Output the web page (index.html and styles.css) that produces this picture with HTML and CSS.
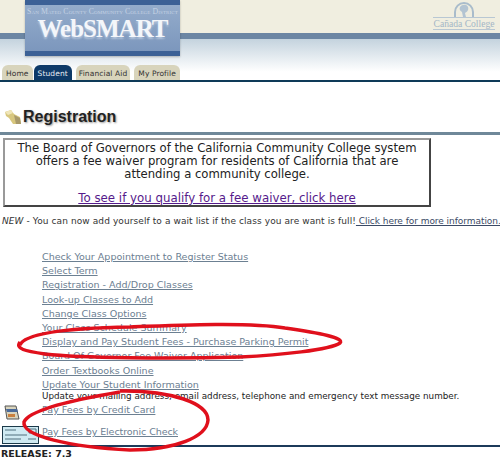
FILE: index.html
```html
<!DOCTYPE html>
<html lang="en">
<head>
    <meta charset="UTF-8">
    <title>WebSMART - Registration</title>
    <link rel="stylesheet" href="styles.css">
</head>
<body>
    <div class="page">
        <div class="header">
            <div class="band-top"></div>
            <div class="band-bar"></div>
            <div class="band-fade">
                <div class="tabs">
                    <a class="tab tab-home">Home</a>
                    <a class="tab tab-active">Student</a>
                    <a class="tab tab-aid">Financial Aid</a>
                    <a class="tab">My Profile</a>
                </div>
            </div>
            <div class="band-line"></div>

            <div class="logo">
                <div class="logo-district">San Mateo County Community College District</div>
                <div class="logo-name">WebSMART</div>
            </div>

            <div class="college">
                <svg class="college-mark" width="24" height="15" viewBox="0 0 24 15">
                    <path d="M3 15V10a9 9 0 0 1 18 0v5" fill="none" stroke="#a9bccb" stroke-width="2"/>
                    <path d="M8 5c2-3 7-3 8 0s-1 5-3 6l1 4h-3l-1-5c-2-1-3-3-2-5z" fill="#b3c4d2"/>
                </svg>
                <div class="college-name">Cañada College</div>
            </div>
        </div>

        <div class="title-row">
            <svg width="18" height="16" viewBox="0 0 18 16">
                <path d="M1 3 7 1l3 4 6 3 1 7H9L5 9 2 7z" fill="#d8c77e"/>
                <path d="M1 3 7 1l2 3-5 2z" fill="#f0e6b8"/>
                <path d="M10 6l6 3 1 6H12z" fill="#a8996a"/>
            </svg>
            <h1>Registration</h1>
        </div>
        <div class="rule"></div>

        <div class="waiver">
            <p>The Board of Governors of the California Community College system<br>
            offers a fee waiver program for residents of California that are<br>
            attending a community college.</p>
            <a class="waiver-link">To see if you qualify for a fee waiver, click here</a>
        </div>

        <p class="notice"><em>NEW</em> - You can now add yourself to a wait list if the class you are want is full!<a class="notice-link"> Click here for more information.</a></p>

        <ul class="menu">
            <li><a>Check Your Appointment to Register Status</a></li>
            <li><a>Select Term</a></li>
            <li><a>Registration - Add/Drop Classes</a></li>
            <li><a>Look-up Classes to Add</a></li>
            <li><a>Change Class Options</a></li>
            <li><a>Your Class Schedule Summary</a></li>
            <li><a>Display and Pay Student Fees - Purchase Parking Permit</a></li>
            <li><a>Board Of Governor Fee Waiver Application</a></li>
            <li><a>Order Textbooks Online</a></li>
            <li><a>Update Your Student Information</a></li>
        </ul>
        <p class="menu-note">Update your mailing address, email address, telephone and emergency text message number.</p>

        <div class="pay-row pay-card">
            <svg width="16" height="15" viewBox="0 0 16 15">
                <path d="M1 1h11l3 13H3z" fill="#d9d4bd" stroke="#555"/>
                <path d="M2 4h11l1 3H3z" fill="#4a6a9a"/>
                <path d="M4 9h7v3H4z" fill="#c9803f"/>
            </svg>
            <a>Pay Fees by Credit Card</a>
        </div>
        <div class="pay-row pay-check">
            <svg width="37" height="18" viewBox="0 0 37 18">
                <rect x="0.5" y="0.5" width="36" height="17" fill="#cfeaf2" stroke="#1c3a4a"/>
                <path d="M3 4h11M27 3h7v4h-7zM3 9h22M3 13h16M26 13h8" stroke="#50707f" fill="none"/>
            </svg>
            <a>Pay Fees by Electronic Check</a>
        </div>

        <div class="footer-line"></div>
        <div class="release">RELEASE: 7.3</div>

        <svg class="marks" width="500" height="460" viewBox="0 0 500 460">
            <path d="M20 345C25 333 70 328 130 327 180 325 250 322 285 328 320 333 345 338 340 343 330 350 280 355 240 357 170 359 80 358 45 354 25 351 15 349 20 342" fill="none" stroke="#e0101c" stroke-width="3.5"/>
            <path d="M120 392C90 397 30 408 24 422 22 436 70 447 130 450 175 450 207 437 208 420 208 403 170 390 120 391" fill="none" stroke="#e0101c" stroke-width="3.5"/>
        </svg>
    </div>
</body>
</html>
```

FILE: styles.css
```css
body {
    margin: 0;
    background-color: #ffffff;
    color: #333333;
    font-family: "DejaVu Sans", Verdana, sans-serif;
    font-size: 9px;
}

.page {
    position: relative;
    width: 500px;
    height: 460px;
    overflow: hidden;
}

.header {
    position: relative;
}

.band-top {
    height: 33px;
    background-color: #f0eee0;
}

.band-bar {
    height: 6px;
    background-color: #6c86a3;
}

.band-fade {
    display: flex;
    align-items: flex-end;
    height: 41px;
    background: linear-gradient(#c4d3de, #ffffff 80%);
}

.band-line {
    height: 2px;
    background-color: #0e3a58;
}

.tabs {
    display: flex;
    gap: 4px;
    padding-left: 2px;
}

.tab {
    display: block;
    height: 15px;
    padding: 0 4px;
    border-radius: 6px 6px 0 0;
    background-color: #d8d4bc;
    color: #333333;
    font-size: 7.5px;
    letter-spacing: 0.1px;
    line-height: 17px;
}

.tab-home {
    margin-right: -3px;
}

.tab-aid {
    padding: 0 3px;
}

.tab-active {
    background-color: #0e3a68;
    color: #e8eef4;
}

.logo {
    position: absolute;
    top: 0;
    left: 25px;
    width: 155px;
    height: 56px;
    box-sizing: border-box;
    padding-top: 3px;
    border-top: 5px solid #3c6196;
    border-bottom: 5px solid #3c6196;
    background: linear-gradient(#94accb, #7c97bd);
    text-align: center;
    box-shadow: 0 1px 2px rgba(0, 0, 0, 0.25);
}

.logo-district {
    color: #c4d2e4;
    font-family: "Liberation Serif", serif;
    font-size: 7.8px;
    font-variant: small-caps;
    letter-spacing: 0.11px;
    white-space: nowrap;
    line-height: 8px;
}

.logo-name {
    color: #f4f6fa;
    font-family: "Liberation Serif", serif;
    font-size: 25px;
    font-weight: bold;
    letter-spacing: -1px;
    line-height: 26px;
    text-shadow: 0 2px 2px rgba(230, 238, 246, 0.5);
}

.college {
    position: absolute;
    top: 2px;
    left: 433px;
    width: 62px;
    text-align: center;
}

.college-mark {
    display: block;
    margin: 0 auto;
}

.college-name {
    border-top: 1px solid #b8c7d3;
    border-bottom: 1px solid #b8c7d3;
    color: #a3b6c6;
    font-family: "Liberation Serif", serif;
    font-size: 9.6px;
    line-height: 11px;
    white-space: nowrap;
}

.title-row {
    display: flex;
    align-items: center;
    gap: 1px;
    height: 24px;
    margin-top: 23px;
    padding-left: 4px;
}

.title-row h1 {
    margin: 0;
    color: #222222;
    font-family: "Liberation Sans", Arial, sans-serif;
    font-size: 16px;
    font-weight: bold;
    text-shadow: 1px 1px 2px rgba(0, 0, 0, 0.4);
}

.rule {
    height: 3px;
    margin-top: 3px;
    background-color: #6f8899;
}

.waiver {
    box-sizing: border-box;
    width: 428px;
    height: 69px;
    margin: 3px 0 0 3px;
    padding-top: 2px;
    border: 2px solid;
    border-color: #999999 #444444 #444444 #999999;
    color: #222222;
    font-size: 11.65px;
    line-height: 13px;
    text-align: center;
}

.waiver p {
    margin: 0 0 11px;
}

.waiver-link {
    color: #551a8b;
    font-size: 11.8px;
    text-decoration: underline;
}

.notice {
    margin: 9px 0 0 2px;
    line-height: 11px;
    letter-spacing: 0.09px;
    white-space: nowrap;
}

.notice-link {
    color: #3b4a66;
    letter-spacing: -0.05px;
    text-decoration: underline;
}

.menu {
    margin: 23px 0 0;
    padding: 0 0 0 42px;
    list-style: none;
}

.menu li {
    height: 14.2px;
    font-size: 9.65px;
    line-height: 14px;
}

.menu a,
.pay-row a {
    color: #6c8092;
    font-size: 9.55px;
    text-decoration: underline;
}

.menu-note {
    margin: -1px 0 0 42px;
    color: #222222;
    font-size: 8.8px;
    line-height: 11px;
    white-space: nowrap;
}

.pay-row {
    display: flex;
    align-items: flex-start;
    line-height: 14px;
}

.pay-card {
    height: 16px;
    margin-top: 1px;
    gap: 22px;
    padding-left: 4px;
}

.pay-card svg {
    margin-top: 2px;
}

.pay-check {
    height: 18px;
    margin-top: 6px;
    gap: 3px;
    padding-left: 2px;
}

.pay-check svg {
    margin-top: 1px;
}

.pay-check a {
    letter-spacing: -0.1px;
}

.footer-line {
    height: 2px;
    margin-top: 2px;
    background-color: #1c3a5a;
}

.release {
    padding-left: 1px;
    color: #222222;
    font-size: 9.5px;
    font-weight: bold;
    line-height: 14px;
}

.marks {
    position: absolute;
    top: 0;
    left: 0;
}
```
